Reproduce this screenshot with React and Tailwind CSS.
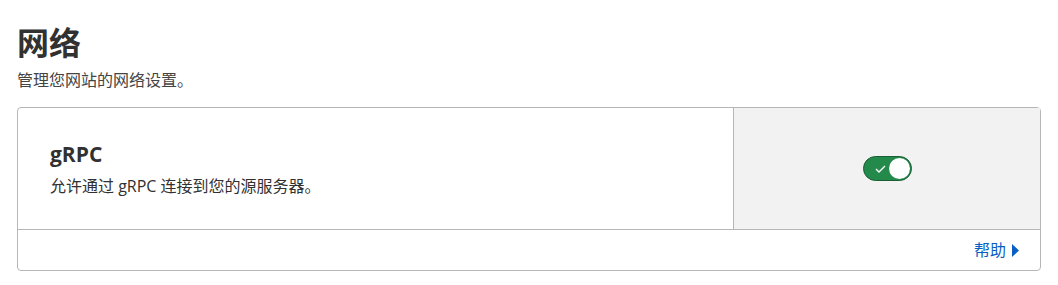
import React, { useState } from 'react';

function Toggle({ checked, onChange }) {
  return (
    <button
      type="button"
      onClick={() => onChange(!checked)}
      className={`relative flex h-[25px] w-[49px] items-center rounded-full border border-[#1a5e34] ${checked ? 'bg-[#238a4b]' : 'bg-[#888]'}`}
    >
      {checked && (
        <svg className="absolute left-[11px] top-[8px]" width="11" height="8" viewBox="0 0 11 8" fill="none">
          <path d="M1 4l3 3 6-6" stroke="#fff" strokeWidth="1.4" />
        </svg>
      )}
      <span
        className={`absolute top-[1px] h-[21px] w-[21px] rounded-full bg-white ${checked ? 'right-[1px]' : 'left-[1px]'}`}
      />
    </button>
  );
}

export default function App() {
  const [enabled, setEnabled] = useState(true);

  return (
    <div className="min-h-[285px] bg-white px-[17px] pt-[21px] text-[#313131]" style={{ fontFamily: '"Open Sans", "Noto Sans CJK SC", sans-serif' }}>
      <h1 className="text-[32px] font-bold leading-[44px] text-[#313131]">网络</h1>
      <p className="mt-[4px] text-[16px] leading-[22px] text-[#444]">管理您网站的网络设置。</p>

      <div className="mt-[16px] w-[1024px] rounded-[4px] border border-[#b6b6b6]">
        <div className="flex h-[122px] border-b border-[#b6b6b6]">
          <div className="flex flex-1 flex-col justify-center pl-[32px]">
            <h2 className="text-[21px] font-bold leading-[26px] text-[#313131]">gRPC</h2>
            <p className="mt-[8px] text-[16px] leading-[22px] text-[#313131]">允许通过 gRPC 连接到您的源服务器。</p>
          </div>
          <div className="flex w-[307px] items-center justify-center border-l border-[#b6b6b6] bg-[#f2f2f2]">
            <Toggle checked={enabled} onChange={setEnabled} />
          </div>
        </div>
        <div className="flex h-[40px] items-center justify-end pr-[21px]">
          <a href="#" className="flex items-center gap-[6px] text-[16px] text-[#0a5fc2]">
            帮助
            <svg width="7" height="13" viewBox="0 0 7 13">
              <path d="M0 0l7 6.5-7 6.5z" fill="#0a5fc2" />
            </svg>
          </a>
        </div>
      </div>
    </div>
  );
}
